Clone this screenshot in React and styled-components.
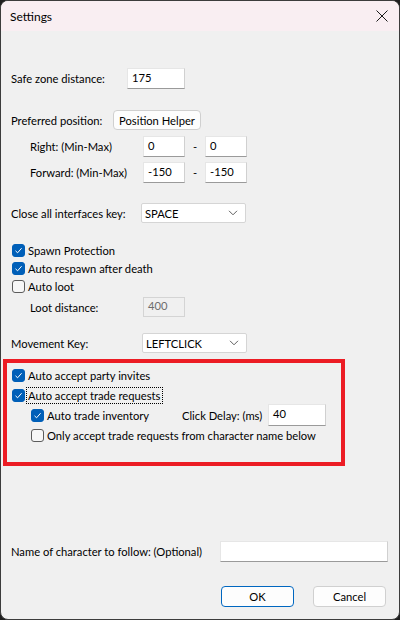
import styled, { createGlobalStyle } from "styled-components";

const GlobalStyle = createGlobalStyle`
  html, body {
    margin: 0;
    padding: 0;
    background: #1f1f1f;
  }
  body {
    font-family: Lato, "Liberation Sans", Arial, sans-serif;
    font-size: 11.2px;
    color: #000;
  }
`;

const Window = styled.div`
  box-sizing: border-box;
  width: 400px;
  height: 620px;
  border: 1px solid #3c3c3c;
  border-radius: 8px;
  overflow: hidden;
  background: #f0f0f0;
  display: flex;
  flex-direction: column;
`;

const TitleBar = styled.div`
  height: 30px;
  flex-shrink: 0;
  background: #f9eef2;
  display: flex;
  align-items: center;
  justify-content: space-between;
  padding: 0 11px 0 9px;
  font-size: 12px;
`;

const Body = styled.div`
  flex: 1;
  display: flex;
  flex-direction: column;
  padding: 37px 0 0 10px;
`;

const Row = styled.div`
  display: flex;
  align-items: center;
  height: ${(p) => p.h || 21}px;
  margin-top: ${(p) => p.mt || 0}px;
  padding-left: ${(p) => p.indent || 0}px;
`;

const Label = styled.span`
  width: ${(p) => p.w}px;
  flex-shrink: 0;
  white-space: nowrap;
`;

const Input = styled.div`
  box-sizing: border-box;
  width: ${(p) => p.w}px;
  height: ${(p) => p.h || 21}px;
  background: ${(p) => (p.disabled ? "#f0f0f0" : "#fff")};
  border: 1px solid ${(p) => (p.disabled ? "#d4d4d4" : "#e6e6e6")};
  border-bottom-color: ${(p) => (p.disabled ? "#d4d4d4" : "#9a9a9a")};
  border-right-color: ${(p) => (p.disabled ? "#d4d4d4" : "#d0d0d0")};
  color: ${(p) => (p.disabled ? "#6d6d6d" : "#000")};
  padding: 0 0 2px 4px;
  display: flex;
  align-items: center;
  line-height: 1;
`;

const Dash = styled.span`
  width: 20px;
  text-align: center;
`;

const Select = styled.div`
  box-sizing: border-box;
  width: ${(p) => p.w}px;
  height: 20px;
  background: #fff;
  border: 1px solid #d5d5d5;
  border-radius: 2px;
  display: flex;
  align-items: center;
  justify-content: space-between;
  padding: 0 7px 0 3px;
`;

const Button = styled.div`
  box-sizing: border-box;
  width: ${(p) => p.w}px;
  height: ${(p) => p.h || 20}px;
  background: #fdfdfd;
  border: 1px solid ${(p) => (p.primary ? "#0067c0" : "#d0d0d0")};
  border-radius: 4px;
  display: flex;
  align-items: center;
  justify-content: center;
`;

const CheckRow = styled.div`
  display: flex;
  align-items: center;
  height: ${(p) => p.h || 18}px;
  padding-left: ${(p) => p.indent || 0}px;
  margin-top: ${(p) => p.mt || 0}px;
  white-space: nowrap;
`;

const Box = styled.span`
  box-sizing: border-box;
  width: 13px;
  height: 13px;
  border-radius: 3px;
  margin: 0 3px 0 1px;
  flex-shrink: 0;
  display: flex;
  align-items: center;
  justify-content: center;
  background: ${(p) => (p.checked ? "#005fb8" : "#f7f7f7")};
  border: 1px solid ${(p) => (p.checked ? "#005fb8" : "#5c5c5c")};
`;

const FocusText = styled.span`
  outline: 1px dotted #000;
  outline-offset: 1px;
  padding-right: 1px;
`;

const RedBox = styled.div`
  box-sizing: border-box;
  width: 342px;
  height: 107px;
  margin: 6px 0 0 -8px;
  border: 4px solid #ec1c24;
  padding: 2px 0 0 4px;
`;

const Gap = styled.div`
  flex: 1;
`;

const Footer = styled.div`
  display: flex;
  justify-content: flex-end;
  gap: 19px;
  margin-top: 24px;
  padding: 0 13px 12px 0;
`;

const Check = ({ checked }) => (
  <Box checked={checked}>
    {checked && (
      <svg width="9" height="9" viewBox="0 0 9 9">
        <path d="M1.5 4.8 L3.6 6.8 L7.6 2.2" fill="none" stroke="#fff" strokeWidth="1" />
      </svg>
    )}
  </Box>
);

const Chevron = () => (
  <svg width="10" height="6" viewBox="0 0 10 6">
    <path d="M1 0.8 L5 4.8 L9 0.8" fill="none" stroke="#5e5e5e" strokeWidth="1" />
  </svg>
);

const CloseIcon = () => (
  <svg width="12" height="12" viewBox="0 0 12 12">
    <path d="M0.5 0.5 L11.5 11.5 M11.5 0.5 L0.5 11.5" stroke="#1a1a1a" strokeWidth="1" />
  </svg>
);

const App = () => {
  return (
    <>
      <GlobalStyle />
      <Window>
        <TitleBar>
          <span>Settings</span>
          <CloseIcon />
        </TitleBar>
        <Body>
          <Row>
            <Label w={116}>Safe zone distance:</Label>
            <Input w={58}>175</Input>
          </Row>
          <Row mt={21} h={20}>
            <Label w={102}>Preferred position:</Label>
            <Button w={88}>Position Helper</Button>
          </Row>
          <Row mt={6} indent={19}>
            <Label w={113}>Right: (Min-Max)</Label>
            <Input w={42}>0</Input>
            <Dash>-</Dash>
            <Input w={42}>0</Input>
          </Row>
          <Row mt={5} indent={19}>
            <Label w={113}>Forward: (Min-Max)</Label>
            <Input w={42}>-150</Input>
            <Dash>-</Dash>
            <Input w={42}>-150</Input>
          </Row>
          <Row mt={20} h={20}>
            <Label w={130}>Close all interfaces key:</Label>
            <Select w={105}>
              SPACE
              <Chevron />
            </Select>
          </Row>
          <CheckRow mt={18}>
            <Check checked />
            Spawn Protection
          </CheckRow>
          <CheckRow>
            <Check checked />
            Auto respawn after death
          </CheckRow>
          <CheckRow>
            <Check />
            Auto loot
          </CheckRow>
          <Row mt={2} h={20} indent={19}>
            <Label w={113}>Loot distance:</Label>
            <Input w={42} h={20} disabled>
              400
            </Input>
          </Row>
          <Row mt={16} h={20}>
            <Label w={131}>Movement Key:</Label>
            <Select w={105}>
              LEFTCLICK
              <Chevron />
            </Select>
          </Row>
          <RedBox>
            <CheckRow h={20}>
              <Check checked />
              Auto accept party invites
            </CheckRow>
            <CheckRow h={20}>
              <Check checked />
              <FocusText>Auto accept trade requests</FocusText>
            </CheckRow>
            <CheckRow h={20} indent={19}>
              <Check checked />
              <Label w={135}>Auto trade inventory</Label>
              <Label w={86}>Click Delay: (ms)</Label>
              <Input w={58} h={22}>40</Input>
            </CheckRow>
            <CheckRow h={20} indent={19}>
              <Check />
              Only accept trade requests from character name below
            </CheckRow>
          </RedBox>
          <Gap />
          <Row>
            <Label w={209}>Name of character to follow: (Optional)</Label>
            <Input w={168} />
          </Row>
        </Body>
        <Footer>
          <Button w={73} h={21} primary>OK</Button>
          <Button w={73} h={21}>Cancel</Button>
        </Footer>
      </Window>
    </>
  );
};

export default App;
